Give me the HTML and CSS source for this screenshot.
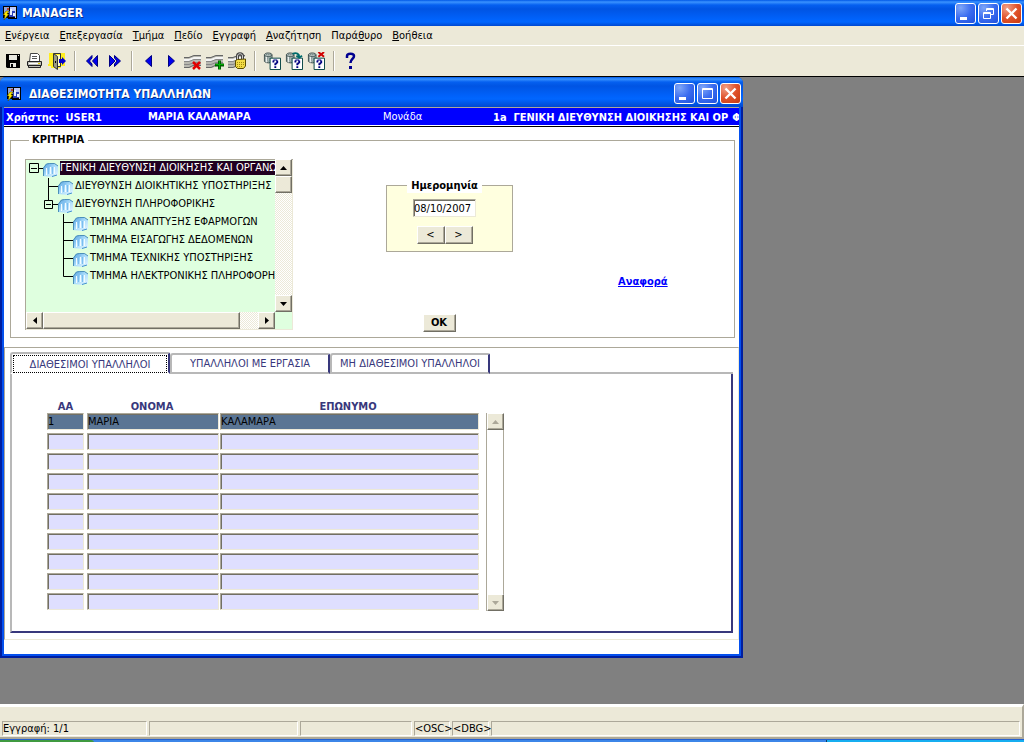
FILE: index.html
```html
<!DOCTYPE html>
<html lang="el">
<head>
<meta charset="utf-8">
<title>MANAGER</title>
<link rel="stylesheet" href="styles.css">
</head>
<body>
<svg class="defs" aria-hidden="true">
  <defs>
    <linearGradient id="glass" x1="0" y1="0" x2="1" y2="1">
      <stop offset="0" stop-color="#4d9bdc"/><stop offset="0.5" stop-color="#a9dcfb"/><stop offset="1" stop-color="#eaf8ff"/>
    </linearGradient>
    <symbol id="app" viewBox="0 0 16 16">
      <path fill="#000" d="M1 1h14v13H6v-1H1z"/><path fill="#8fa4d8" d="M2 2h5v6H2z"/><path fill="#b8c8ff" d="M8 2h5v4H8z"/>
      <path fill="#2a3fb8" d="M7 6h6v6H7z"/><path fill="#e8eeff" d="M8 4h2v6H8zM11 8h2v3h-2z"/><path fill="#b8402a" d="M5 3h2v2H5z"/>
      <path fill="#c8ccd8" d="M13 2h1v11h-1z"/><path fill="#ffe800" stroke="#403800" stroke-width=".5" d="M4 6h3L5 9h2l-5 6 1-5H1z"/>
    </symbol>
    <symbol id="folder" viewBox="0 0 15 15">
      <path fill="url(#glass)" d="M0 14V6l3-4 4-1h4l4 3v9l-5 1-1 1z"/>
      <path fill="none" stroke="#4b8fb9" d="M.5 14V6l3-4 3-.5h5L15 4"/>
      <path fill="none" stroke="#f3fbff" d="M3.500 13V6M7.500 12V5M11.500 12V5"/>
      <path fill="none" stroke="#7bbcf0" d="M5.500 12V5l2-2M9.500 12V5"/>
      <path fill="none" stroke="#3f8fd0" d="M9 14.500l5-1.500"/>
    </symbol>
    <symbol id="db" viewBox="0 0 19 19">
      <path fill="#b9c4c0" stroke="#3c4c4c" d="M1.500 3v7c2 2 7 2 8 0V3M5.500 1C3 1 1.500 2 1.500 3s2 2 4 2 4-1 4-2-1.500-2-4-2z"/>
      <path fill="none" stroke="#4f6a68" stroke-dasharray="1 1" d="M2 6.500h7M3 4.500h5M2 8.500h7M3 10.500h6M3 2.500h5"/>
      <path fill="none" stroke="#fff" d="M3.500 5v6"/>
      <path fill="#fff" stroke="#004040" d="M7.500 6.500h11v12h-11z"/>
      <path fill="#000080" d="M10 9h1V8h4v1h1v3h-1v1h-1v1h-2v-2h1v-1h1V9h-2v2h-2zM12 15h2v2h-2z"/>
    </symbol>
    <symbol id="rows" viewBox="0 0 18 18">
      <path fill="#b8b8b0" d="M0 5h5l5-2h7v11h-6l-5 2H0z"/>
      <path fill="none" stroke="#666" d="M0 5.500h5l5-2h7M0 15.500h5l4-2h8"/>
      <path fill="none" stroke="#f4f4f4" stroke-width="2" d="M0 8h5l5-2h7"/>
      <path fill="none" stroke="#888" d="M0 9.500h5l5-2h7M0 12.500h5l5-2h7"/>
    </symbol>
  </defs>
</svg>

<header class="titlebar">
  <svg class="app-icon"><use href="#app"/></svg>
  <h1 class="title">MANAGER</h1>
  <div class="controls">
    <button class="ctl" aria-label="Minimize"><svg viewBox="0 0 21 21"><path fill="#fff" d="M5 14h7v3H5z"/></svg></button>
    <button class="ctl" aria-label="Restore"><svg viewBox="0 0 21 21"><path fill="none" stroke="#fff" d="M8.500 8V5.500h7v6H13M8 6.500h8"/><path fill="none" stroke="#fff" d="M5.500 9.500h7v6h-7zM5 10.500h8"/></svg></button>
    <button class="ctl close" aria-label="Close"><svg viewBox="0 0 21 21"><path fill="none" stroke="#fff" stroke-width="2.400" d="M5.500 5.500l10 10M15.500 5.500l-10 10"/></svg></button>
  </div>
</header>

<nav class="menu">
  <button><u>Ε</u>νέργεια</button>
  <button><u>Ε</u>πεξεργασία</button>
  <button><u>Τ</u>μήμα</button>
  <button><u>Π</u>εδίο</button>
  <button><u>Ε</u>γγραφή</button>
  <button><u>Α</u>ναζήτηση</button>
  <button>Παρά<u>θ</u>υρο</button>
  <button><u>Β</u>οήθεια</button>
</nav>

<div class="toolbar" role="toolbar" aria-label="Εργαλεία">
  <button class="tool" aria-label="Αποθήκευση"><svg viewBox="0 0 18 18"><path d="M2 2h14v14H3l-1-1z"/><path fill="#e8e8e0" d="M5 3h8v5H5zM6 11h6v4H6z"/><path d="M7 12h2v3H7z"/><path fill="#e8e8e0" d="M14 3h1v1h-1z"/></svg></button>
  <button class="tool" aria-label="Εκτύπωση"><svg viewBox="0 0 18 18"><path fill="#fff" stroke="#444" d="M3.500 9.500l1-8h7l2 2v6"/><path stroke="#555" d="M6 4.500h5M6 6.500h5"/><path fill="#bdbdb4" stroke="#222" d="M1.500 9.500h14v4h-14zM2.500 13.500h12v2h-12z"/><path stroke="#fff" d="M3 11.500h9"/><path fill="#e0d000" d="M12 11h2v1h-2z"/></svg></button>
  <button class="tool" aria-label="Έξοδος"><svg viewBox="0 0 18 18"><path fill="#ffee20" d="M1 1h16v13h-4v2H3v-2H0v-2h1z"/><path fill="#fffbc0" d="M5 3h7v11H5z"/><path fill="#9b9b82" stroke="#333" d="M5.500 14.500v-13l4 3v13z"/><path fill="none" stroke="#333" d="M6 1.500h6.500v13H10"/><path d="M7 9h1v2H7z"/><path fill="#0000d0" d="M11 7h3V5l4 4-4 4v-2h-3z"/></svg></button>
  <span class="sep"></span>
  <button class="tool" aria-label="Προηγούμενη ομάδα"><svg viewBox="0 0 18 18"><path fill="#00e" stroke="#000080" d="M9 3.500L3.500 9 9 14.500V12L6.500 9 9 6zM14.500 3.500L9.500 9l5 5.500z"/></svg></button>
  <button class="tool" aria-label="Επόμενη ομάδα"><svg viewBox="0 0 18 18"><path fill="#00e" stroke="#000080" d="M9.500 3.500L15.500 9l-6 5.500V12l2.500-3-2.500-3zM4.500 3.500L10 9l-5.500 5.500z"/></svg></button>
  <span class="sep"></span>
  <button class="tool" aria-label="Προηγούμενη εγγραφή"><svg viewBox="0 0 18 18"><path fill="#00e" stroke="#000080" d="M11.500 3.500v11L5.500 9z"/></svg></button>
  <button class="tool" aria-label="Επόμενη εγγραφή"><svg viewBox="0 0 18 18"><path fill="#00e" stroke="#000080" d="M6.500 3.500v11l6-5.500z"/></svg></button>
  <button class="tool" aria-label="Διαγραφή"><svg viewBox="0 0 18 18"><use href="#rows"/><path stroke="#e00000" stroke-width="2.500" d="M9 10l7 7M16 10l-7 7"/></svg></button>
  <button class="tool" aria-label="Εισαγωγή"><svg viewBox="0 0 18 18"><use href="#rows"/><path stroke="#006000" stroke-width="3" d="M9 13h9M13.500 8.500v9"/><path stroke="#00b000" d="M9.500 12.500h8M13.500 9v8"/></svg></button>
  <button class="tool" aria-label="Κλείδωμα"><svg viewBox="0 0 18 18"><use href="#rows"/><path fill="none" stroke="#444" stroke-width="3" d="M9.500 8V4c0-3 5-3 5 0v4"/><path fill="none" stroke="#ccc" d="M9.500 8V4c0-3 5-3 5 0v4"/><path fill="#f3dc45" stroke="#5b4c00" d="M7.500 8.500l2-1 8-.5v7l-2 2.500h-6l-2-2z"/><path stroke="#a38b10" stroke-dasharray="1 1" d="M9 10.500h8M9 12.500h8M9 14.500h6"/></svg></button>
  <span class="sep"></span>
  <button class="tool" aria-label="Εισαγωγή ερωτήματος"><svg viewBox="0 0 19 19"><use href="#db"/></svg></button>
  <button class="tool" aria-label="Εκτέλεση ερωτήματος"><svg viewBox="0 0 19 19"><use href="#db"/><path fill="none" stroke="#006c6c" stroke-width="2" d="M8 2c4-2 7 0 7 3M12 4l3 2 3-2"/></svg></button>
  <button class="tool" aria-label="Ακύρωση ερωτήματος"><svg viewBox="0 0 19 19"><use href="#db"/><path stroke="#d00000" stroke-width="2" d="M12 0l6 5M18 0l-6 5"/></svg></button>
  <span class="sep"></span>
  <button class="tool" aria-label="Βοήθεια"><svg viewBox="0 0 18 18"><path fill="none" stroke="#000090" stroke-width="2.500" d="M5 6V4c0-3 7-3 7 0 0 3-3.500 3-3.500 7"/><path fill="#000090" d="M7 14h3v3H7z"/></svg></button>
</div>

<main class="workspace">
  <section class="window">
    <header class="window-title">
      <svg class="app-icon"><use href="#app"/></svg>
      <h2 class="title">ΔΙΑΘΕΣΙΜΟΤΗΤΑ ΥΠΑΛΛΗΛΩΝ</h2>
      <div class="controls">
        <button class="ctl" aria-label="Minimize"><svg viewBox="0 0 21 21"><path fill="#fff" d="M5 14h7v3H5z"/></svg></button>
        <button class="ctl" aria-label="Maximize"><svg viewBox="0 0 21 21"><path fill="none" stroke="#fff" d="M5.500 5.500h10v10h-10zM5 6.500h11"/></svg></button>
        <button class="ctl close" aria-label="Close"><svg viewBox="0 0 21 21"><path fill="none" stroke="#fff" stroke-width="2.400" d="M5.500 5.500l10 10M15.500 5.500l-10 10"/></svg></button>
      </div>
    </header>
    <div class="window-body">
      <div class="userband">
        <span class="band-user">Χρήστης:&nbsp; USER1</span>
        <span class="band-name">ΜΑΡΙΑ ΚΑΛΑΜΑΡΑ</span>
        <span class="band-label">Μονάδα</span>
        <span class="band-unit">1a&nbsp; ΓΕΝΙΚΗ ΔΙΕΥΘΥΝΣΗ ΔΙΟΙΚΗΣΗΣ ΚΑΙ ΟΡ</span>
        <span class="band-more">Φ</span>
      </div>

      <fieldset class="criteria">
        <legend>ΚΡΙΤΗΡΙΑ</legend>
        <div class="criteria-grid">
          <div class="tree">
            <ul class="nodes">
              <li class="node"><svg class="guide g1" viewBox="0 0 17 18"><path d="M3.500 4.500h9v9h-9zM5 9.500h6M13 9.500h4"/></svg><svg class="folder"><use href="#folder"/></svg><span class="label selected">ΓΕΝΙΚΗ ΔΙΕΥΘΥΝΣΗ ΔΙΟΙΚΗΣΗΣ ΚΑΙ ΟΡΓΑΝΩ</span></li>
              <li class="node"><svg class="guide g2" viewBox="0 0 32 18"><path d="M22.500 1v17M23 9.500h9"/></svg><svg class="folder"><use href="#folder"/></svg><span class="label">ΔΙΕΥΘΥΝΣΗ ΔΙΟΙΚΗΤΙΚΗΣ ΥΠΟΣΤΗΡΙΞΗΣ</span></li>
              <li class="node"><svg class="guide g2" viewBox="0 0 32 18"><path d="M22.500 0v5M18.500 5.500h8v8h-8zM20 9.500h5M27 9.500h5"/></svg><svg class="folder"><use href="#folder"/></svg><span class="label">ΔΙΕΥΘΥΝΣΗ ΠΛΗΡΟΦΟΡΙΚΗΣ</span></li>
              <li class="node"><svg class="guide g3" viewBox="0 0 47 18"><path d="M37.500 1v17M38 9.500h9"/></svg><svg class="folder"><use href="#folder"/></svg><span class="label">ΤΜΗΜΑ ΑΝΑΠΤΥΞΗΣ ΕΦΑΡΜΟΓΩΝ</span></li>
              <li class="node"><svg class="guide g3" viewBox="0 0 47 18"><path d="M37.500 0v18M38 9.500h9"/></svg><svg class="folder"><use href="#folder"/></svg><span class="label">ΤΜΗΜΑ ΕΙΣΑΓΩΓΗΣ ΔΕΔΟΜΕΝΩΝ</span></li>
              <li class="node"><svg class="guide g3" viewBox="0 0 47 18"><path d="M37.500 0v18M38 9.500h9"/></svg><svg class="folder"><use href="#folder"/></svg><span class="label">ΤΜΗΜΑ ΤΕΧΝΙΚΗΣ ΥΠΟΣΤΗΡΙΞΗΣ</span></li>
              <li class="node"><svg class="guide g3" viewBox="0 0 47 18"><path d="M37.500 0v9.500H47"/></svg><svg class="folder"><use href="#folder"/></svg><span class="label">ΤΜΗΜΑ ΗΛΕΚΤΡΟΝΙΚΗΣ ΠΛΗΡΟΦΟΡΗΣ</span></li>
            </ul>
            <div class="vbar">
              <button class="arrow" aria-label="Πάνω"><svg viewBox="0 0 7 4"><path d="M0 4h7L3.500 0z"/></svg></button>
              <div class="thumb thumb-v"></div>
              <button class="arrow end" aria-label="Κάτω"><svg viewBox="0 0 7 4"><path d="M0 0h7L3.500 4z"/></svg></button>
            </div>
            <div class="hbar">
              <button class="arrow" aria-label="Αριστερά"><svg class="side" viewBox="0 0 4 7"><path d="M4 0v7L0 3.500z"/></svg></button>
              <div class="thumb thumb-h"></div>
              <button class="arrow end" aria-label="Δεξιά"><svg class="side" viewBox="0 0 4 7"><path d="M0 0v7l4-3.500z"/></svg></button>
            </div>
          </div>
          <div class="datecol">
            <div class="datebox">
              <label class="datelabel" for="date">Ημερομηνία</label>
              <input class="date" id="date" value="08/10/2007">
              <div class="steps">
                <button class="push step" aria-label="Προηγούμενη ημέρα">&lt;</button><button class="push step" aria-label="Επόμενη ημέρα">&gt;</button>
              </div>
            </div>
            <button class="push ok">OK</button>
          </div>
          <a class="report" href="#report">Αναφορά</a>
        </div>
      </fieldset>

      <div class="results">
        <div class="tabs" role="tablist">
          <button class="tab active" role="tab" aria-selected="true"><span class="focus">ΔΙΑΘΕΣΙΜΟΙ ΥΠΑΛΛΗΛΟΙ</span></button>
          <button class="tab" role="tab" aria-selected="false">ΥΠΑΛΛΗΛΟΙ ΜΕ ΕΡΓΑΣΙΑ</button>
          <button class="tab" role="tab" aria-selected="false">ΜΗ ΔΙΑΘΕΣΙΜΟΙ ΥΠΑΛΛΗΛΟΙ</button>
          <span class="tab-rest"></span>
        </div>
        <div class="panel">
          <table class="grid">
            <colgroup><col class="c-aa"><col class="c-first"><col class="c-last"></colgroup>
            <thead><tr><th>ΑΑ</th><th>ΟΝΟΜΑ</th><th>ΕΠΩΝΥΜΟ</th></tr></thead>
            <tbody>
              <tr class="current"><td><input aria-label="ΑΑ 1" value="1"></td><td><input aria-label="ΟΝΟΜΑ 1" value="ΜΑΡΙΑ"></td><td><input aria-label="ΕΠΩΝΥΜΟ 1" value="ΚΑΛΑΜΑΡΑ"></td></tr>
              <tr><td><input aria-label="ΑΑ 2"></td><td><input aria-label="ΟΝΟΜΑ 2"></td><td><input aria-label="ΕΠΩΝΥΜΟ 2"></td></tr>
              <tr><td><input aria-label="ΑΑ 3"></td><td><input aria-label="ΟΝΟΜΑ 3"></td><td><input aria-label="ΕΠΩΝΥΜΟ 3"></td></tr>
              <tr><td><input aria-label="ΑΑ 4"></td><td><input aria-label="ΟΝΟΜΑ 4"></td><td><input aria-label="ΕΠΩΝΥΜΟ 4"></td></tr>
              <tr><td><input aria-label="ΑΑ 5"></td><td><input aria-label="ΟΝΟΜΑ 5"></td><td><input aria-label="ΕΠΩΝΥΜΟ 5"></td></tr>
              <tr><td><input aria-label="ΑΑ 6"></td><td><input aria-label="ΟΝΟΜΑ 6"></td><td><input aria-label="ΕΠΩΝΥΜΟ 6"></td></tr>
              <tr><td><input aria-label="ΑΑ 7"></td><td><input aria-label="ΟΝΟΜΑ 7"></td><td><input aria-label="ΕΠΩΝΥΜΟ 7"></td></tr>
              <tr><td><input aria-label="ΑΑ 8"></td><td><input aria-label="ΟΝΟΜΑ 8"></td><td><input aria-label="ΕΠΩΝΥΜΟ 8"></td></tr>
              <tr><td><input aria-label="ΑΑ 9"></td><td><input aria-label="ΟΝΟΜΑ 9"></td><td><input aria-label="ΕΠΩΝΥΜΟ 9"></td></tr>
              <tr><td><input aria-label="ΑΑ 10"></td><td><input aria-label="ΟΝΟΜΑ 10"></td><td><input aria-label="ΕΠΩΝΥΜΟ 10"></td></tr>
            </tbody>
          </table>
          <div class="gridbar">
            <button class="arrow" disabled aria-label="Πάνω"><svg viewBox="0 0 7 4"><path d="M0 4h7L3.500 0z"/></svg></button>
            <button class="arrow end" disabled aria-label="Κάτω"><svg viewBox="0 0 7 4"><path d="M0 0h7L3.500 4z"/></svg></button>
          </div>
        </div>
      </div>
    </div>
  </section>
</main>

<footer class="status">
  <div class="cells">
    <span class="cell s1">Εγγραφή: 1/1</span>
    <span class="cell s2"></span>
    <span class="cell s3"></span>
    <span class="cell s4">&lt;OSC&gt;</span>
    <span class="cell s5">&lt;DBG&gt;</span>
    <span class="cell s6"></span>
  </div>
</footer>
<div class="taskbar"><span class="start"></span><span class="tasks"></span><span class="tray"></span></div>
</body>
</html>
```

FILE: styles.css
```css
* { box-sizing: border-box; }

body {
  margin: 0;
  min-height: 100vh;
  display: flex;
  flex-direction: column;
  background: #808080;
  color: #000;
  font: 11px/14px "DejaVu Sans Condensed", "DejaVu Sans", sans-serif;
}

button, input { font: inherit; color: inherit; margin: 0; padding: 0; border: 0; border-radius: 0; }
button { background: none; }
svg { display: block; }
.defs { position: absolute; width: 0; height: 0; }

/* Title bars */
.titlebar, .window-title {
  display: flex;
  align-items: center;
  color: #fff;
  background: linear-gradient(#0058e6 0, #3a93ff 2px, #0560f0 5px, #0054e3 9px, #0062fb 19px, #0066ff 22px, #0048d0 100%);
}
.titlebar { height: 26px; padding: 0 2px; }
.window-title { height: 30px; padding: 3px 2px 0 6px; border-radius: 6px 6px 0 0; }
.app-icon { width: 16px; height: 16px; flex: none; }
.title {
  flex: 1;
  margin: 0 0 0 4px;
  font: bold 12px/16px "DejaVu Sans Condensed", "DejaVu Sans", sans-serif;
  text-shadow: 1px 1px #0a2a88;
  white-space: nowrap;
}
.window-title .title { margin-left: 7px; }
.controls { display: flex; gap: 2px; }
.ctl {
  width: 21px;
  height: 21px;
  border: 1px solid #fff;
  border-radius: 3px;
  background: radial-gradient(circle at 25% 20%, #7ea6f8, #3a6cf0 50%, #1f50dc);
}
.ctl svg { width: 21px; height: 21px; margin: -1px; }
.close { background: radial-gradient(circle at 25% 20%, #f0a088, #e0532c 50%, #c83a10); }

/* Menu and toolbar */
.menu {
  display: flex;
  gap: 10px;
  height: 20px;
  padding: 3px 5px 2px;
  background: #ece9d8;
  border-bottom: 1px solid #fff;
}
.toolbar {
  display: flex;
  align-items: center;
  height: 31px;
  padding: 0 2px;
  background: #ece9d8;
  border-bottom: 1px solid #000;
}
.tool { width: 22px; height: 22px; padding: 2px; flex: none; }
.tool svg { width: 18px; height: 18px; }
.sep { width: 2px; height: 20px; margin: 0 5px 0 6px; border-left: 1px solid #aca899; border-right: 1px solid #fff; }

/* Inner window */
.workspace {
  flex: 1;
  display: grid;
  grid-template-columns: minmax(0, 1fr) 281px;
  padding-bottom: 46px;
}
.window {
  grid-column: 1;
  display: flex;
  flex-direction: column;
  background: #0046d8;
  border-radius: 6px 6px 0 0;
}
.window-body {
  flex: 1;
  display: flex;
  flex-direction: column;
  margin: 0 4px 4px;
  padding-bottom: 14px;
  background: #fff;
  box-shadow: 0 0 0 2px #0450ee, 0 0 0 4px #001ea0;
}
.window-title { position: relative; }

.userband {
  display: flex;
  gap: 8px;
  height: 20px;
  padding: 3px 0 0 2px;
  overflow: hidden;
  white-space: nowrap;
  color: #fff;
  font-weight: bold;
  background: #00f;
  border-top: 1px solid #aca899;
  border-bottom: 1px solid #000;
  box-shadow: inset 0 -1px #fff;
}
.band-user { flex: 0 0 134px; }
.band-name { flex: 0 0 227px; margin-top: -1px; }
.band-label { flex: 0 0 102px; margin-top: -1px; font-weight: normal; }
.band-unit { flex: none; }
.band-more { flex: 1; margin-left: -4px; }

/* Criteria */
.criteria {
  min-width: 0;
  margin: 6px 4px 9px 6px;
  padding: 12px 14px 5px;
  border: 1px solid #aca899;
}
.criteria legend { margin-left: 4px; padding: 0 4px 0 3px; font-weight: bold; }
.criteria-grid { display: grid; grid-template-columns: 268px 127px 1fr; column-gap: 93px; }

.tree {
  display: grid;
  grid-template-columns: minmax(0, 1fr) 17px;
  grid-template-rows: 153px 17px;
  height: 171px;
  padding: 0 1px 1px;
  background: #dfffdf;
  box-shadow: inset 1px 1px #aca899, inset -1px -1px #ece9d8;
}
.nodes { list-style: none; margin: 0; padding: 0; overflow: hidden; }
.node { display: flex; align-items: center; height: 18px; white-space: nowrap; }
.guide { flex: none; height: 18px; fill: none; stroke: #000; }
.g1 { width: 17px; }
.g2 { width: 32px; }
.g3 { width: 47px; }
.folder { width: 15px; height: 15px; margin: 3px 2px 0 0; flex: none; }
.selected { color: #fff; background: #200020; }

.vbar, .hbar {
  display: flex;
  background: conic-gradient(#fff 25%, #ece9d8 0 50%, #fff 0 75%, #ece9d8 0) 0 0 / 2px 2px;
}
.vbar { flex-direction: column; }
.arrow, .thumb, .push {
  background: #ece9d8;
  border: 1px solid #fff;
  border-right-color: #716f64;
  border-bottom-color: #716f64;
  box-shadow: inset -1px -1px #aca899;
}
.arrow { width: 17px; height: 17px; flex: none; }
.arrow svg { width: 7px; height: 4px; margin: 0 auto; }
.arrow .side { width: 4px; height: 7px; }
.arrow:disabled { fill: #aca899; }
.end { margin: auto 0 0; }
.hbar .end { margin: 0 0 0 auto; }
.thumb-v { height: 17px; }
.thumb-h { width: 197px; }

.datecol { display: flex; flex-direction: column; align-items: center; padding-top: 26px; }
.datebox {
  display: flex;
  flex-direction: column;
  align-items: center;
  width: 127px;
  height: 67px;
  padding-right: 10px;
  background: #ffffdf;
  border: 1px solid #aca899;
}
.datelabel { margin-top: -7px; padding: 0 4px; font-weight: bold; background: #fff; }
.date {
  width: 63px;
  height: 18px;
  margin: 6px 0 9px;
  background: #fff;
  border: 1px solid #aca899;
  border-right-color: #ece9d8;
  border-bottom-color: #ece9d8;
  box-shadow: inset 1px 1px #716f64;
}
.steps { display: flex; }
.step { width: 28px; height: 18px; }
.ok { width: 33px; height: 18px; margin: 62px 21px 0 0; font-weight: bold; }
.report { justify-self: start; margin: 116px 0 0 12px; color: #00f; font-weight: bold; }

/* Results */
.results {
  flex: 1;
  display: flex;
  flex-direction: column;
  padding: 4px 5px 6px;
  border: 1px solid #aca899;
  border-right-color: #ece9d8;
  border-bottom-color: #ece9d8;
}
.tabs { display: flex; align-items: flex-end; color: #38387c; white-space: nowrap; }
.tab {
  height: 21px;
  border: 2px solid #b8b8b8;
  border-right-color: #38387c;
  border-radius: 3px 2px 0 0;
}
.tab.active { width: 160px; height: 22px; padding: 1px; border-bottom-color: #fff; }
.tab:nth-child(2) { width: 160px; }
.tab:nth-child(3) { width: 160px; }
.focus { display: block; height: 18px; line-height: 17px; border: 1px dotted #000; }
.tab-rest { flex: 1; height: 2px; background: #b8b8b8; }
.panel {
  flex: 1;
  display: flex;
  align-items: flex-start;
  gap: 7px;
  padding: 27px 35px 18px;
  border: 2px solid #38387c;
  border-left-color: #b8b8b8;
  border-top: 0;
}
.grid { border-collapse: collapse; table-layout: fixed; width: 432px; }
.c-aa { width: 40px; }
.c-first { width: 133px; }
.c-last { width: 259px; }
.grid th { height: 12px; padding: 0 3px 0 0; color: #38387c; font-weight: bold; line-height: 12px; text-align: center; }
.grid td { height: 20px; padding: 0 1px 3px 0; }
.grid td:first-child { padding-right: 3px; }
.grid td:last-child { padding-right: 0; }
.grid input {
  display: block;
  width: 100%;
  height: 17px;
  background: #dfdfff;
  border: 1px solid #aca899;
  border-right-color: #ece9d8;
  border-bottom-color: #ece9d8;
  box-shadow: inset 1px 1px #716f64;
}
.grid .current input { background: #5a7594; }
.gridbar {
  display: flex;
  flex-direction: column;
  width: 18px;
  height: 198px;
  margin-top: 12px;
  border-left: 1px solid #aca899;
  border-right: 1px solid #aca899;
}

/* Status bar */
.status { padding: 14px 2px 0; background: #ece9d8; border-top: 3px solid #fff; border-right: 2px solid #aca899; border-bottom: 2px solid #aca899; }
.cells { display: flex; gap: 2px; padding-bottom: 1px; }
.cell { height: 15px; white-space: nowrap; border: 1px solid #aca899; border-right-color: #fff; border-bottom-color: #fff; }
.s1 { width: 145px; }
.s2 { width: 149px; }
.s3 { width: 112px; }
.s4 { width: 36px; }
.s5 { width: 37px; }
.s6 { flex: 1; }
.taskbar { display: flex; height: 4px; background: #3c86e8; border-top: 1px solid #2560d0; }
.start { width: 94px; background: #3f9a40; border-radius: 0 4px 0 0; }
.tasks { flex: 1; }
.tray { width: 198px; background: #16aef0; border-left: 1px solid #103a60; }
```
